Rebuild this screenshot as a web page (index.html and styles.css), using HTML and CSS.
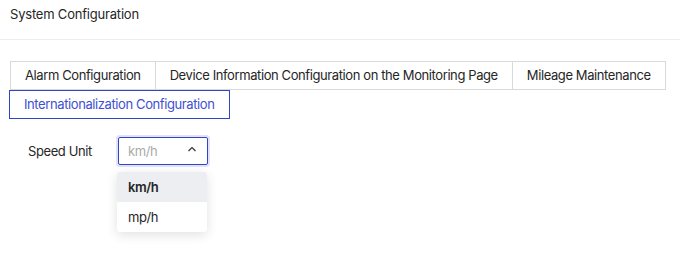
FILE: index.html
```html
<!DOCTYPE html>
<html>
<head>
<meta charset="utf-8">
<link rel="stylesheet" href="styles.css">
</head>
<body>
<div class="header">System Configuration</div>
<div class="content">
  <div class="tabs">
    <div class="tab">Alarm Configuration</div>
    <div class="tab">Device Information Configuration on the Monitoring Page</div>
    <div class="tab">Mileage Maintenance</div>
    <div class="tab active">Internationalization Configuration</div>
  </div>
  <div class="form-row">
    <label class="label">Speed Unit</label>
    <div class="select-wrap">
      <div class="select">
        <span class="placeholder">km/h</span>
        <svg class="caret" width="10" height="6" viewBox="0 0 10 6"><path d="M1.5 5 L5 1.5 L8.5 5" fill="none" stroke="#333" stroke-width="1.2"/></svg>
      </div>
      <div class="dropdown">
        <div class="option selected">km/h</div>
        <div class="option">mp/h</div>
      </div>
    </div>
  </div>
</div>
</body>
</html>
```
FILE: styles.css
```css
* { box-sizing: border-box; }
html, body { height: 100%; }
body {
  margin: 0;
  font-family: "Inter", "Noto Sans", sans-serif;
  font-size: 13px;
  letter-spacing: -0.4px;
  color: #222;
  background: #fff;
}
.header {
  height: 40px;
  line-height: 28px;
  padding: 0 10px;
  border-bottom: 1px solid #ededed;
  color: #262626;
  letter-spacing: -0.2px;
}
.content {
  padding: 21px 10px 0;
}
.tabs {
  display: flex;
  flex-wrap: wrap;
  width: 660px;
}
.tab {
  height: 29px;
  line-height: 27px;
  padding: 0 14px;
  border: 1px solid #d9d9d9;
  margin-right: -1px;
  color: #262626;
  white-space: nowrap;
}
.tab.active {
  margin-left: -1px;
  border-color: #2d45c6;
  color: #4050d0;
}
.form-row {
  display: flex;
  align-items: flex-start;
  padding-left: 18px;
  margin-top: 18px;
}
.label {
  width: 90px;
  line-height: 28px;
  color: #262626;
}
.select-wrap {
  display: flex;
  flex-direction: column;
  gap: 7px;
  width: 90px;
}
.select {
  height: 28px;
  border: 1px solid #2d45c6;
  border-radius: 2px;
  box-shadow: 0 0 0 2px #e4e1f7;
  display: flex;
  align-items: center;
  justify-content: space-between;
  padding: 0 10px 0 9px;
}
.placeholder { color: #aaa; }
.caret { margin-top: -4px; }
.dropdown {
  margin-left: -1px;
  width: 90px;
  background: #fff;
  border-radius: 3px;
  box-shadow: 0 3px 12px rgba(0,0,0,0.12);
  overflow: hidden;
}
.option {
  height: 30px;
  line-height: 30px;
  padding: 0 11px;
  color: #262626;
}
.option.selected {
  background: #eceef1;
  font-weight: 600;
}
```
